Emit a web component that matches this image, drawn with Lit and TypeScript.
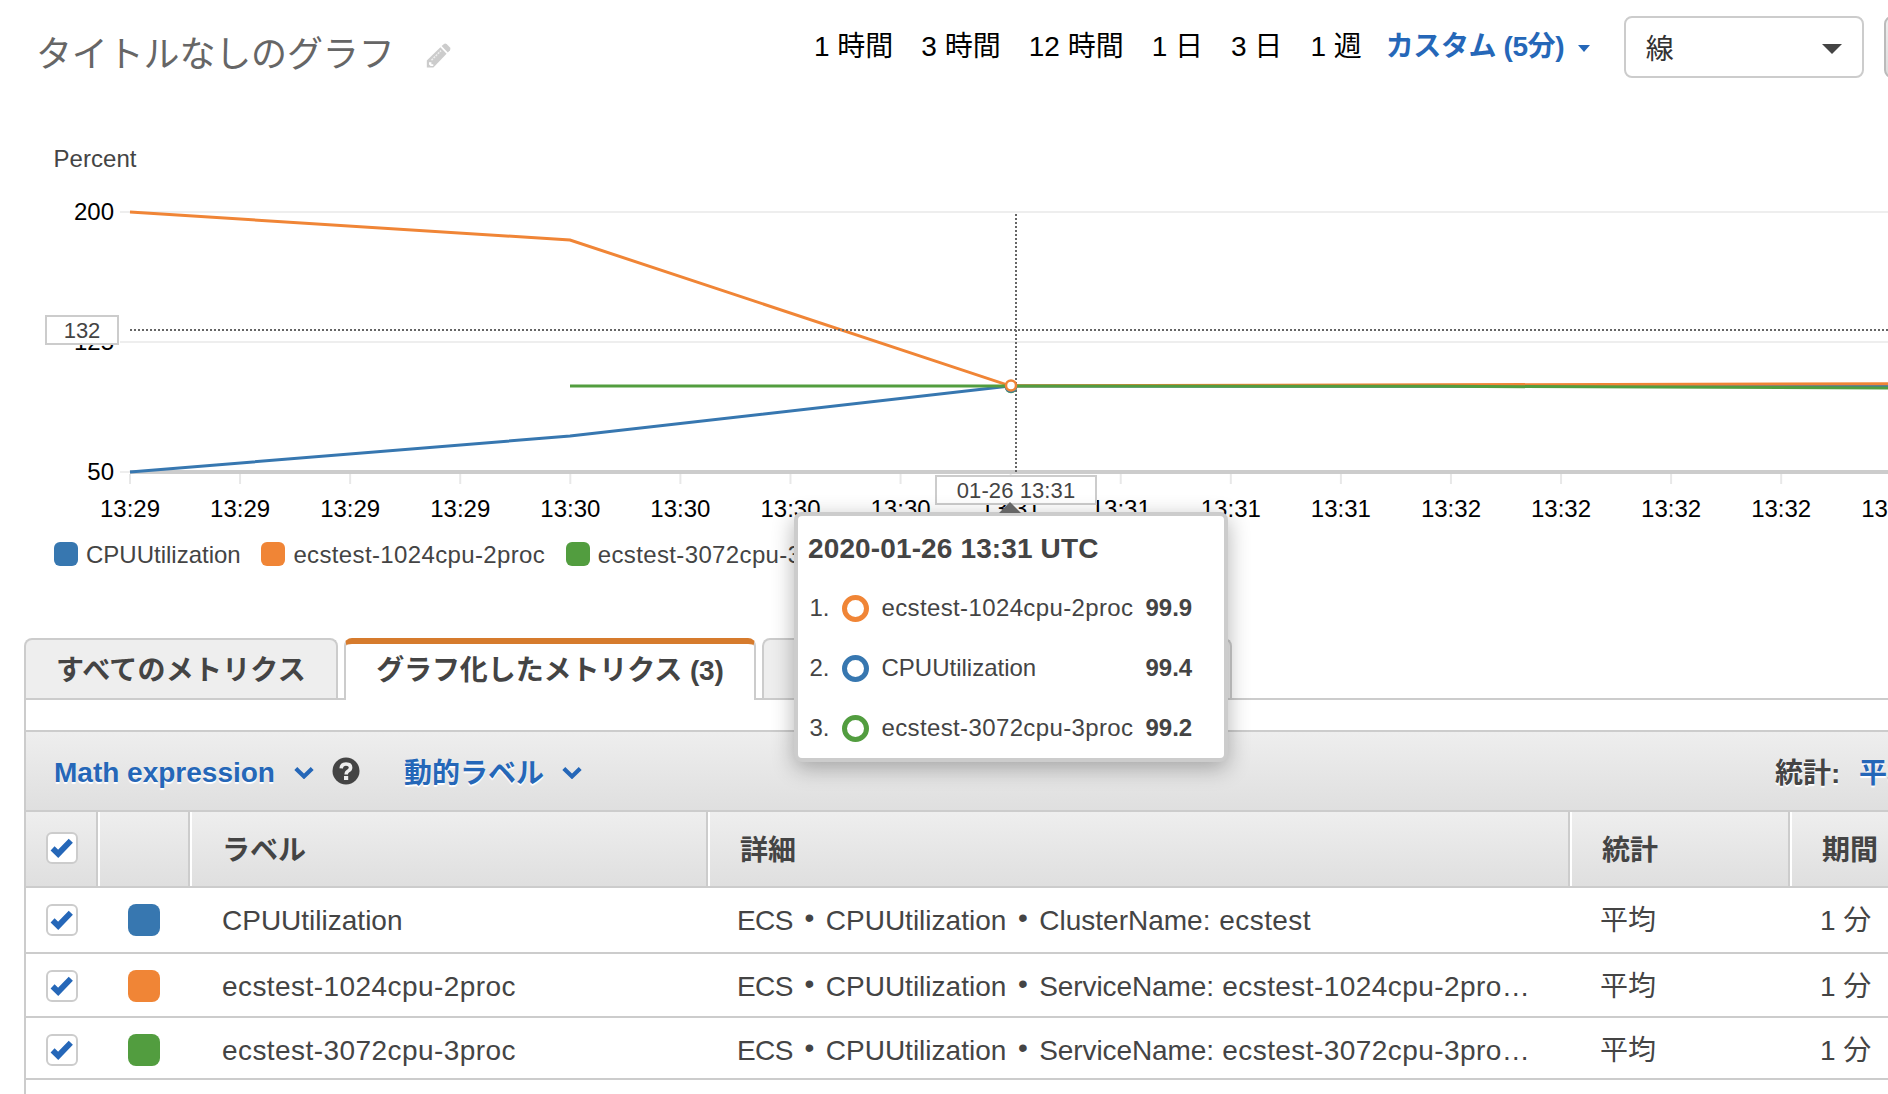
import { LitElement, html, svg, css } from "lit";
import { customElement, property, state } from "lit/decorators.js";
import { classMap } from "lit/directives/class-map.js";

const BLUE = "#3777b0";
const ORANGE = "#f08536";
const GREEN = "#529d3f";

interface Metric {
  label: string;
  tone: "blue" | "orange" | "green";
  dimension: string;
  target: string;
}

const METRICS: Metric[] = [
  { label: "CPUUtilization", tone: "blue", dimension: "ClusterName:", target: "ecstest" },
  { label: "ecstest-1024cpu-2proc", tone: "orange", dimension: "ServiceName:", target: "ecstest-1024cpu-2pro…" },
  { label: "ecstest-3072cpu-3proc", tone: "green", dimension: "ServiceName:", target: "ecstest-3072cpu-3pro…" },
];

const TICKS = [
  "13:29", "13:29", "13:29", "13:29", "13:30", "13:30", "13:30", "13:30", "13:31",
  "13:31", "13:31", "13:31", "13:32", "13:32", "13:32", "13:32", "13:33",
];

@customElement("check-box")
class CheckBox extends LitElement {
  static styles = css`
    :host { display: block; width: 32px; height: 32px; }
    .box {
      box-sizing: border-box; width: 32px; height: 32px; border: 2px solid #ccc;
      border-radius: 6px; background: #fff;
    }
    svg { display: block; }
  `;
  render() {
    return html`<div class="box">
      <svg width="28" height="28" viewBox="0 0 28 28">
        <path d="M4.6 14.4 L10.2 19.8 L22.8 6.8" fill="none" stroke="#2567b8" stroke-width="5.8" />
      </svg>
    </div>`;
  }
}

@customElement("metric-chart")
class MetricChart extends LitElement {
  static styles = css`
    :host { display: block; position: relative; height: 400px; }
    svg { display: block; }
    text { font: 24px "Liberation Sans", Arial, sans-serif; fill: #000; }
    .unit { fill: #444; }
    .tag {
      position: absolute; box-sizing: border-box; border: 2px solid #ccc; background: #fff;
      color: #444; font-size: 22px; line-height: 27px; text-align: center;
    }
    .y-tag { left: 45px; top: 185px; width: 74px; height: 30px; }
    .x-tag { left: 935px; top: 345px; width: 162px; height: 30px; letter-spacing: 0.1px; }
  `;
  render() {
    return html`
      <svg width="1888" height="400" viewBox="0 130 1888 400">
        <text class="unit" x="53.5" y="167" textLength="83">Percent</text>
        <text x="114" y="220" text-anchor="end">200</text>
        <text x="114" y="350" text-anchor="end">125</text>
        <text x="114" y="480" text-anchor="end">50</text>
        <path d="M120 212H1888M120 342H1888M120 472H130" stroke="#eee" stroke-width="2" />
        <path d="M130 472H1888" stroke="#ccc" stroke-width="4" />
        ${TICKS.map((t, i) => {
          const x = 130 + i * 110.08;
          return svg`
            <line x1=${x} x2=${x} y1="474" y2="484" stroke="#e8e8e8" stroke-width="2" />
            <text x=${x} y="517" text-anchor="middle">${t}</text>`;
        })}
        <g fill="none" stroke-width="3">
          <path d="M130 472L570 436L1010 386L1888 386.6" stroke=${BLUE} />
          <path d="M130 212L570 240L1010 385.8L1888 383.8" stroke=${ORANGE} />
          <path d="M570 386H1010L1440 386.3L1888 388" stroke=${GREEN} />
        </g>
        <g stroke="#666" stroke-width="2" stroke-dasharray="2 2">
          <path d="M130 330H1888" />
          <path d="M1016 214V472" />
        </g>
        <circle cx="1011" cy="387" r="5" fill="#fff" stroke=${GREEN} stroke-width="2.5" />
        <circle cx="1011" cy="386.5" r="5" fill="#fff" stroke=${BLUE} stroke-width="2.5" />
        <circle cx="1011" cy="385.5" r="5" fill="#fff" stroke=${ORANGE} stroke-width="2.5" />
      </svg>
      <div class="tag y-tag">132</div>
      <div class="tag x-tag">01-26 13:31</div>
    `;
  }
}

@customElement("hover-card")
class HoverCard extends LitElement {
  static styles = css`
    :host { display: block; width: 434px; }
    .arrow {
      position: absolute; left: 205px; top: -10px; width: 0; height: 0;
      border-left: 11px solid transparent; border-right: 11px solid transparent;
      border-bottom: 11px solid #666;
    }
    .card {
      box-sizing: border-box; height: 250px; border: 4px solid #ccc; border-radius: 8px;
      background: #fff; box-shadow: 0 6px 22px rgba(0, 0, 0, 0.3); color: #444;
      padding: 13px 10px 0 10px; position: relative;
    }
    .title { font-size: 28px; font-weight: 700; line-height: 40px; height: 49px; letter-spacing: 0.13px; }
    .line {
      display: grid; grid-template-columns: 32px 27px 13px 269.5px auto; align-items: center;
      height: 60px; font-size: 24px; padding-left: 1.5px;
    }
    .name { grid-column: 4; white-space: nowrap; }
    .wide { letter-spacing: 0.37px; }
    .ring { box-sizing: border-box; width: 27px; height: 27px; border-radius: 50%; border: 5px solid; }
    .orange { border-color: #f08536; }
    .blue { border-color: #3777b0; }
    .green { border-color: #529d3f; }
    .value { font-weight: 700; margin-left: -5.5px; }
  `;
  render() {
    const rows = [
      { m: METRICS[1], v: "99.9" },
      { m: METRICS[0], v: "99.4" },
      { m: METRICS[2], v: "99.2" },
    ];
    return html`
      <div class="card">
        <div class="title">2020-01-26 13:31 UTC</div>
        ${rows.map(
          ({ m, v }, i) => html`<div class="line">
            <span>${i + 1}.</span>
            <span class=${classMap({ ring: true, [m.tone]: true })}></span>
            <span class=${classMap({ name: true, wide: m.tone !== "blue" })}>${m.label}</span>
            <span class="value">${v}</span>
          </div>`
        )}
      </div>
      <div class="arrow"></div>
    `;
  }
}

@customElement("app-root")
class AppRoot extends LitElement {
  static styles = css`
    :host {
      display: block; position: relative; width: 1888px; height: 1094px; overflow: hidden;
      background: #fff; color: #444;
      font-family: "Liberation Sans", Arial, "Noto Sans CJK JP", sans-serif; font-size: 28px;
    }
    * { box-sizing: border-box; }
    .top { display: flex; height: 130px; padding-left: 36px; white-space: nowrap; }
    .top > *, .ranges > *, .bar > * { flex: none; }
    .title { font-size: 36px; line-height: 52px; color: #666; padding-top: 29px; width: 390px; letter-spacing: -0.15px; }
    .pencil { margin-top: 43px; width: 26px; height: 26px; }
    .ranges { display: flex; gap: 28px; margin-left: 362px; color: #000; line-height: 40px; padding-top: 27px; }
    .custom { font-weight: 700; color: #2567b8; width: 178px; margin-left: -4px; letter-spacing: -0.4px; }
    .caret { width: 12px; height: 7px; margin: 18px 0 0 -14px; }
    .select {
      display: flex; justify-content: space-between; width: 240px; height: 62px; margin: 16px 0 0 34px;
      border: 2px solid #ccc; border-radius: 8px; padding: 0 20px; line-height: 63px; color: #333;
    }
    .select svg { margin-top: 26px; }
    .more {
      width: 60px; height: 62px; margin: 16px 0 0 20px; border: 2px solid #bbb; border-radius: 8px;
      background: linear-gradient(#eee, #ddd);
    }
    .legend { display: flex; height: 108px; padding: 12px 0 0 54px; font-size: 24px; line-height: 26px; }
    .entry { display: flex; gap: 8px; margin-right: 20.7px; }
    .wide { letter-spacing: 0.36px; }
    .dot { width: 24px; height: 24px; border-radius: 6px; }
    .blue { background: #3777b0; }
    .orange { background: #f08536; }
    .green { background: #529d3f; }
    .tabs { display: flex; height: 62px; margin-left: 24px; border-bottom: 2px solid #ccc; }
    .tab {
      height: 60px; border: 2px solid #ccc; border-bottom: 0; border-radius: 8px 8px 0 0; background: #eee;
      font-weight: 700; line-height: 61px; text-align: center; white-space: nowrap; margin-right: 6px;
    }
    .tab.all { width: 314px; letter-spacing: 0.2px; }
    .tab.active { width: 412px; height: 62px; background: #fff; border-top: 6px solid #d67b2d; line-height: 53px; letter-spacing: -0.1px; }
    .tab.last { width: 470px; }
    .panel { margin-left: 24px; border-left: 2px solid #ccc; height: 394px; padding-top: 30px; }
    .bar {
      display: flex; align-items: center; height: 82px; border: solid #ccc; border-width: 2px 0;
      background: linear-gradient(#eee, #dfdfdf); padding-left: 28px; font-weight: 700; white-space: nowrap;
      text-shadow: 0 2px 1px #fff;
    }
    .link { color: #2567b8; }
    .math { width: 240px; padding-top: 4px; }
    .chevron { margin-top: 2px; }
    .help { margin: 0 44px 0 18px; }
    .dynamic { width: 158px; }
    .stat { margin-left: 1193px; width: 84px; }
    .row {
      display: grid; grid-template-columns: 74px 92px 518px 862px 220px 94px;
      border-bottom: 2px solid #ccc; white-space: nowrap; line-height: 32px;
    }
    .head { height: 76px; background: linear-gradient(#eee, #dfdfdf); font-weight: 700; }
    .head .cell { padding: 23px 0 0 30px; border-right: 2px solid #fff; box-shadow: inset -2px 0 #ccc; }
    .head .cell:last-child { border-right: 0; box-shadow: none; }
    .head .cell.pick { padding: 20px 0 0 20px; }
    .body .cell { padding: 17px 0 0 28px; }
    .body .cell.pick { padding: 16px 0 0 20px; }
    .body .cell.color { padding: 16px 0 0 28px; }
    .body .cell.label { padding-left: 30px; }
    .r0 { height: 66px; } .r1 { height: 64px; } .r2 { height: 62px; }
    .swatch { width: 32px; height: 32px; border-radius: 8px; }
    .stretch { letter-spacing: 0.43px; }
    .dimension { width: 180px; }
    .service { width: 183px; letter-spacing: -0.1px; }
    .body .cell.detail { display: flex; padding-left: 27px; }
    .tight { letter-spacing: -0.6px; }
    .sep { width: 33px; text-align: center; line-height: 25px; flex: none; }
    .tip { position: absolute; left: 794px; top: 512px; }
  `;

  @property({ type: String }) heading = "タイトルなしのグラフ";
  @state() private ranges = ["1 時間", "3 時間", "12 時間", "1 日", "3 日", "1 週"];

  private chevron() {
    return html`<svg class="chevron" width="20" height="13" viewBox="0 0 20 13">
      <path d="M1.8 2.4L10 10.4L18.2 2.4" fill="none" stroke="#2567b8" stroke-width="4.2" />
    </svg>`;
  }

  render() {
    return html`
      <div class="top">
        <div class="title">${this.heading}</div>
        <svg class="pencil" viewBox="0 0 26 26" fill="#ccc">
          <path d="M.8 17.6L14.4 4.2L20.6 10.8L7.4 24.6H.8Z" />
          <path d="M15.6 3L18 .9Q19.2 0 20.6 1L24 4.6Q24.9 6 24 7.2L21.8 9.6Z" />
          <path d="M5.5 17.2L15 7.6" stroke="#eee" stroke-width="1.5" stroke-dasharray="2 1" />
          <path d="M3 19.3H5.4V21.2H7.3V23H4.7L3 21.4Z" fill="#fff" />
        </svg>
        <div class="ranges">
          ${this.ranges.map((r) => html`<span>${r}</span>`)}
          <span class="custom">カスタム (5分)</span>
          <svg class="caret" viewBox="0 0 12 7"><path d="M0 0H12L6 7Z" fill="#2567b8" /></svg>
        </div>
        <div class="select">
          <span>線</span>
          <svg width="20" height="10" viewBox="0 0 20 10"><path d="M0 0H20L10 10Z" fill="#444" /></svg>
        </div>
        <div class="more"></div>
      </div>
      <metric-chart></metric-chart>
      <div class="legend">
        ${METRICS.map(
          (m) => html`<div class="entry">
            <span class=${classMap({ dot: true, [m.tone]: true })}></span>
            <span class=${classMap({ wide: m.tone !== "blue" })}>${m.label}</span>
          </div>`
        )}
      </div>
      <div class="tabs">
        <div class="tab all">すべてのメトリクス</div>
        <div class="tab active">グラフ化したメトリクス (3)</div>
        <div class="tab last"></div>
      </div>
      <div class="panel">
        <div class="bar">
          <span class="link math">Math expression</span>${this.chevron()}
          <svg class="help" width="28" height="28" viewBox="0 0 28 28">
            <circle cx="14" cy="14" r="13.5" fill="#444" />
            <path d="M9.2 11.4Q9.4 7 14 7Q18.6 7 18.6 10.6Q18.6 12.8 16.2 14Q14.2 15 14.2 17.4" fill="none" stroke="#eee" stroke-width="3.6" />
            <rect x="12" y="19" width="4.2" height="4" fill="#eee" />
          </svg>
          <span class="link dynamic">動的ラベル</span>${this.chevron()}
          <span class="stat">統計:</span><span class="link">平均</span>
        </div>
        <div class="row head">
          <div class="cell pick"><check-box></check-box></div>
          <div class="cell"></div>
          <div class="cell">ラベル</div>
          <div class="cell">詳細</div>
          <div class="cell">統計</div>
          <div class="cell">期間</div>
        </div>
        ${METRICS.map(
          (m, i) => html`<div class="row body r${i}">
            <div class="cell pick"><check-box></check-box></div>
            <div class="cell color"><div class=${classMap({ swatch: true, [m.tone]: true })}></div></div>
            <div class=${classMap({ cell: true, label: true, stretch: i > 0 })}>${m.label}</div>
            <div class="cell detail">
              <span class="tight">ECS</span><span class="sep">•</span><span>CPUUtilization</span><span class="sep">•</span>
              <span class=${classMap({ dimension: true, service: i > 0 })}>${m.dimension}</span>
              <span class="stretch">${m.target}</span>
            </div>
            <div class="cell">平均</div>
            <div class="cell">1 分</div>
          </div>`
        )}
      </div>
      <hover-card class="tip"></hover-card>
    `;
  }
}
